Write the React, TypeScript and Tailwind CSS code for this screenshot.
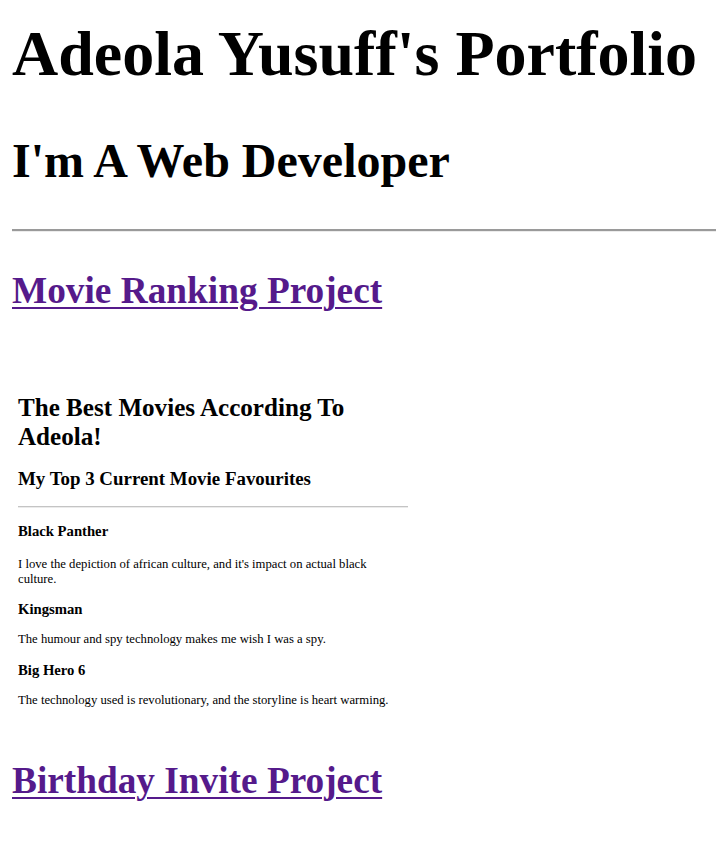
import React from "react";

export default function App() {
  return (
    <div className="bg-white text-black pl-[12px] pb-[60px]" style={{ fontFamily: '"Liberation Serif", "Times New Roman", serif' }}>
      <h1 className="mt-[18px] text-[64px] leading-[72px] font-bold whitespace-nowrap">Adeola Yusuff's Portfolio</h1>
      <h2 className="mt-[44px] text-[48px] leading-[54px] font-bold whitespace-nowrap">I'm A Web Developer</h2>
      <div className="mt-[41px] h-[3px] border-t-2 border-b border-t-[#9a9a9a] border-b-[#ececec]" />
      <h3 className="mt-[37px] text-[37.3px] leading-[43px] font-bold whitespace-nowrap">
        <a href="#" className="text-[#551a8b] underline decoration-[2px] underline-offset-[4px]">Movie Ranking Project</a>
      </h3>
      <div className="mt-[28px] w-[402px] pl-[6px] pr-[6px] pt-[52.6px]">
        <h1 className="text-[25.1px] leading-[29px] font-bold">The Best Movies According To Adeola!</h1>
        <h2 className="mt-[17.5px] text-[18.9px] leading-[22px] font-bold">My Top 3 Current Movie Favourites</h2>
        <div className="mt-[15.5px] h-[2px] border-t border-b border-t-[#c4c4c4] border-b-[#ebebeb]" />
        <h3 className="mt-[15.5px] text-[14.7px] leading-[17px] font-bold">Black Panther</h3>
        <p className="mt-[17px] text-[12.7px] leading-[14.5px]">I love the depiction of african culture, and it's impact on actual black culture.</p>
        <h3 className="mt-[14.5px] text-[14.7px] leading-[17px] font-bold">Kingsman</h3>
        <p className="mt-[14.5px] text-[12.7px] leading-[14.5px]">The humour and spy technology makes me wish I was a spy.</p>
        <h3 className="mt-[15.5px] text-[14.7px] leading-[17px] font-bold">Big Hero 6</h3>
        <p className="mt-[14px] text-[12.7px] leading-[14.5px]">The technology used is revolutionary, and the storyline is heart warming.</p>
      </div>
      <h3 className="mt-[51px] text-[37.3px] leading-[43px] font-bold whitespace-nowrap">
        <a href="#" className="text-[#551a8b] underline decoration-[2px] underline-offset-[4px]">Birthday Invite Project</a>
      </h3>
    </div>
  );
}
